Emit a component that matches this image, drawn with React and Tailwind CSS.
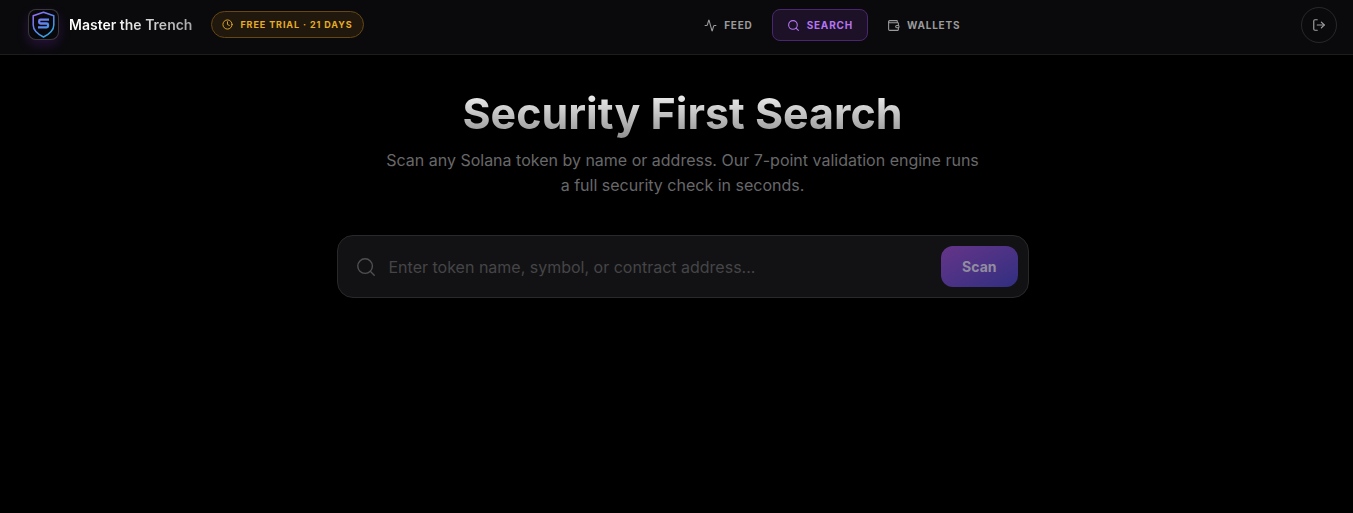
import { useState } from 'react'
import { Activity, Clock, LogOut, Search, Wallet } from 'lucide-react'

const NAV = [
  { id: 'feed', label: 'Feed', icon: Activity },
  { id: 'search', label: 'Search', icon: Search },
  { id: 'wallets', label: 'Wallets', icon: Wallet },
]

function Logo() {
  return (
    <div className="flex size-[31px] items-center justify-center rounded-lg border border-white/20 bg-[#08080c] shadow-[0_5px_12px_rgba(147,51,234,0.2)]">
      <svg width="23" height="27" viewBox="0 0 23 27" fill="none" aria-hidden="true">
        <defs>
          <linearGradient id="shield" x1="1" y1="1" x2="22" y2="26" gradientUnits="userSpaceOnUse">
            <stop stopColor="#9b6cf5" />
            <stop offset="0.5" stopColor="#5b86ee" />
            <stop offset="1" stopColor="#25b5dc" />
          </linearGradient>
        </defs>
        <path
          d="M11.5 1.2 1.2 4.8V14c0 5.500 4.300 9 10.300 12 6-3 10.300-6.500 10.300-12V4.800Z"
          stroke="url(#shield)"
          strokeWidth="1.500"
          strokeLinejoin="round"
        />
        <path
          d="M17 8.700H8.500Q7.200 8.700 7.200 10v1.200q0 1.300 1.300 1.300h6.200q1.300 0 1.300 1.300V15q0 1.300-1.300 1.300H6"
          stroke="url(#shield)"
          strokeWidth="2.300"
        />
      </svg>
    </div>
  )
}

export default function App() {
  const [active, setActive] = useState('search')
  const [query, setQuery] = useState('')

  return (
    <div className="min-h-screen bg-black font-['Inter',sans-serif] text-white">
      <header className="flex items-center justify-between border-b border-white/8 bg-[#0a0a0c] pt-[7px] pr-4 pb-[11px] pl-7">
        <div className="flex items-center pb-px">
          <Logo />
          <span className="ml-[10px] bg-linear-to-r from-white from-30% to-[#a8a8a8] bg-clip-text text-sm font-semibold text-transparent">
            Master the Trench
          </span>
          <div className="ml-[19px] flex h-[27px] items-center gap-[7px] rounded-full border border-[#664711] bg-[#20170d] px-[10px] text-[9px] font-bold tracking-[0.1em] text-[#e7ad25] uppercase">
            <Clock size={11} />
            Free trial · 21 days
          </div>
        </div>

        <nav className="flex gap-1">
          {NAV.map(({ id, label, icon: Icon }) => (
            <button
              key={id}
              type="button"
              onClick={() => setActive(id)}
              className={`flex h-8 items-center gap-[7px] rounded-lg border px-[14px] text-[10px] font-bold tracking-[0.08em] uppercase ${
                active === id
                  ? 'border-[#4b2670] bg-[#1c1126] text-[#b774f2]'
                  : 'border-transparent text-[#9a9a9b]'
              }`}
            >
              <Icon size={13} />
              {label}
            </button>
          ))}
        </nav>

        <button
          type="button"
          aria-label="Log out"
          className="flex size-9 items-center justify-center rounded-full border border-white/12 text-[#a0a0a1]"
        >
          <LogOut size={14} />
        </button>
      </header>

      <main className="flex flex-col items-center pt-8 pr-4 pl-7 text-center">
        <h1 className="bg-linear-to-b from-white to-[#8f8f8f] bg-clip-text text-[43px] leading-[52px] font-bold text-transparent">
          Security First Search
        </h1>
        <p className="mt-[9px] max-w-[600px] text-base leading-[25px] text-[#68686a]">
          Scan any Solana token by name or address. Our 7-point validation engine runs a full security check in
          seconds.
        </p>

        <form
          onSubmit={(e) => e.preventDefault()}
          className="mt-[37px] flex w-full max-w-[692px] items-center rounded-2xl border border-[#29292b] bg-[#121214] p-[10px]"
        >
          <Search size={22} strokeWidth={1.5} className="ml-[7px] shrink-0 text-[#505052]" />
          <input
            type="text"
            aria-label="Token name, symbol, or contract address"
            value={query}
            onChange={(e) => setQuery(e.target.value)}
            placeholder="Enter token name, symbol, or contract address..."
            className="ml-3 min-w-0 flex-1 bg-transparent text-base text-white outline-none placeholder:text-[#454547]"
          />
          <button
            type="submit"
            className="h-[41px] rounded-xl bg-linear-to-br from-[#653489] to-[#302e80] px-[21px] text-sm font-bold text-[#918d9f]"
          >
            Scan
          </button>
        </form>
      </main>
    </div>
  )
}
